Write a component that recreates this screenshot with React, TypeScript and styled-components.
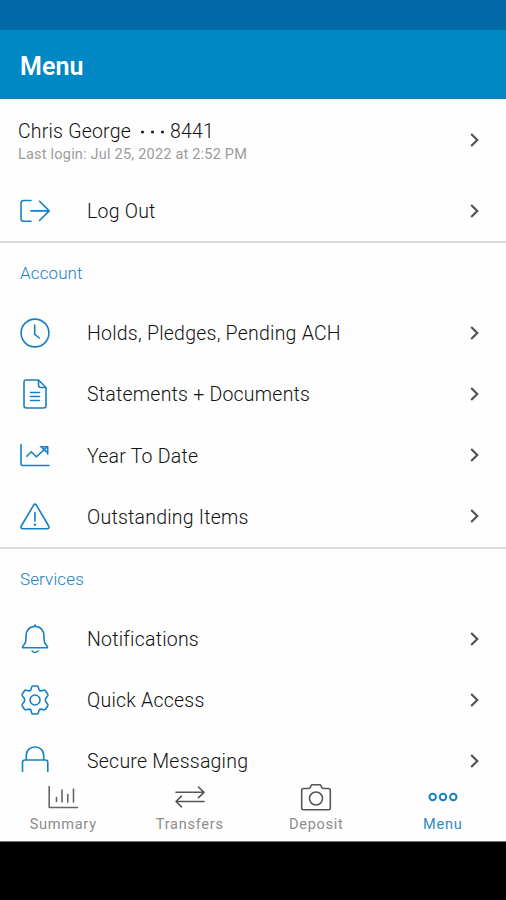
import React from "react";
import styled, { createGlobalStyle } from "styled-components";

const BLUE = "#1780c2";

const GlobalStyle = createGlobalStyle`
  * { box-sizing: border-box; }
  body { margin: 0; background: #000; }
`;

const Screen = styled.div`
  width: 506px;
  height: 900px;
  display: flex;
  flex-direction: column;
  overflow: hidden;
  background: #000;
  font-family: Roboto, sans-serif;
  font-weight: 400;
`;

const StatusBar = styled.div`
  flex: none;
  height: 30px;
  background: #0069a6;
`;

const Header = styled.header`
  flex: none;
  height: 69px;
  display: flex;
  align-items: center;
  padding: 4px 20px 0;
  background: #0088c5;
  border-bottom: 1px solid #2878a6;
`;

const Title = styled.h1`
  margin: 0;
  font-size: 25px;
  font-weight: 600;
  letter-spacing: 0.1px;
  color: #fff;
`;

const Content = styled.main`
  flex: none;
  height: 673px;
  overflow: hidden;
  background: #fefefe;
`;

const Profile = styled.div`
  height: 81px;
  display: flex;
  align-items: center;
  justify-content: space-between;
  padding: 0 23px 0 18px;
`;

const ProfileText = styled.div`
  padding-top: 6px;
`;

const Name = styled.div`
  display: flex;
  align-items: center;
  font-size: 19.5px;
  font-weight: 350;
  line-height: 24px;
  letter-spacing: 0.2px;
  color: #111;
`;

const MaskDots = styled.svg`
  width: 26px;
  height: 4px;
  margin: 0 4px 0 9px;
  fill: #222;
`;

const LastLogin = styled.div`
  font-size: 14.5px;
  line-height: 22px;
  letter-spacing: 0.21px;
  color: #9c9c9c;
`;

const Row = styled.div`
  height: 61.2px;
  display: flex;
  align-items: center;
  padding: 0 23px 0 20px;
`;

const RowLabel = styled.span`
  flex: 1;
  padding: 3px 0 0 37px;
  font-size: 19.5px;
  font-weight: 350;
  line-height: 20px;
  letter-spacing: 0.23px;
  color: #111;
`;

const Divider = styled.div`
  height: 2px;
  background: #dcdcdc;
`;

const SectionTitle = styled.h2`
  height: 59px;
  margin: 0;
  padding: 1px 20px 0;
  display: flex;
  align-items: center;
  font-size: 17px;
  font-weight: 350;
  letter-spacing: 0.12px;
  color: ${BLUE};
`;

const Svg = styled.svg<{ $color?: string; $weight?: number }>`
  flex: none;
  display: block;
  overflow: visible;
  fill: none;
  stroke: ${(p) => p.$color ?? BLUE};
  stroke-width: ${(p) => p.$weight ?? 1.6};
  stroke-linecap: round;
  stroke-linejoin: round;
`;

const ChevronSvg = styled.svg`
  flex: none;
  width: 14px;
  height: 16px;
  fill: none;
  stroke: #505050;
  stroke-width: 2.1;
`;

const NavBar = styled.nav`
  flex: none;
  height: 70px;
  display: grid;
  grid-template-columns: repeat(4, 1fr);
  background: #fefefe;
  border-bottom: 1px solid #777;
`;

const NavItem = styled.div<{ $active?: boolean }>`
  display: flex;
  flex-direction: column;
  align-items: center;
  padding-top: 10px;
  font-size: 14.5px;
  line-height: 20px;
  letter-spacing: 0.75px;
  color: ${(p) => (p.$active ? "#2c8aca" : "#8c8c8c")};
`;

const NavLabel = styled.span`
  margin-top: 3px;
`;

const Chevron = () => (
  <ChevronSvg viewBox="0 0 14 16">
    <path d="M2.2 2l6.1 6-6.1 6" />
  </ChevronSvg>
);

const icons = {
  logout: <path d="M11 4.500H3.800Q1 4.500 1 7.300v15.200Q1 25.300 3.800 25.300H11M11 14.900H29M19.500 5.300l9.700 9.600-9.700 9.600" />,
  clock: (
    <>
      <circle cx="15" cy="15" r="13.900" />
      <path d="M14.700 7v9.300l4.600 3.700" />
    </>
  ),
  document: (
    <>
      <path d="M6.200 1H18.500L26 8.500V26.500Q26 29 23.500 29H6.500Q4 29 4 26.500V3.200Q4 1 6.200 1zM18.500 1.200V6Q18.500 8.500 21 8.500H26" />
      <path d="M10.500 13.500h9M10.500 17.500h9M10.500 21.500h9" />
    </>
  ),
  trend: (
    <>
      <path d="M1 4.500V24Q1 25.500 2.500 25.500H29M6.800 16.300l4.500-4.500 5 5L27 7" />
      <path d="M20.500 6.700h7.200v7.400M22.300 7.800l4.200 4" />
    </>
  ),
  warning: (
    <>
      <path d="M13.600 4.200Q15 2 16.400 4.200L28.700 25Q29.700 27.700 27.500 27.700H2.500Q.3 27.700 1.300 25zM14.900 11.500v8.600" />
      <circle cx="14.900" cy="23.800" r=".5" />
    </>
  ),
  bell: (
    <path d="M15 .8v1.400M6 14.500V12C6 6.500 9.700 2.400 15 2.400S24 6.500 24 12v2.500c0 3 .5 4.800 2 6.300l1.200 1.400Q28 23.800 26.500 23.800H3.500Q2 23.800 2.800 22.200L4 20.800c1.500-1.500 2-3.300 2-6.300zM12 27q3 3 6 0" />
  ),
  gear: (
    <>
      <circle cx="15" cy="15" r="5" />
      <path d="M11.800 1.800Q12 1 13 1H17Q18 1 18.200 1.800L19 4.500Q19.400 5.800 20.700 5.900L24 5.200Q25 5 25.500 5.800L27.800 9.300Q28.300 10.200 27.600 11L25.800 13.200Q24.800 15 25.800 16.800L27.600 19Q28.300 19.800 27.800 20.700L25.500 24.200Q25 25 24 24.800L20.700 24.100Q19.400 24.200 19 25.500L18.200 28.200Q18 29 17 29H13Q12 29 11.800 28.200L11 25.500Q10.600 24.200 9.300 24.100L6 24.800Q5 25 4.500 24.200L2.200 20.700Q1.700 19.800 2.400 19L4.200 16.800Q5.200 15 4.200 13.200L2.400 11Q1.700 10.200 2.200 9.300L4.500 5.800Q5 5 6 5.200L9.300 5.900Q10.600 5.800 11 4.500z" />
    </>
  ),
  lock: (
    <path d="M6.300 14V9.500C6.300 4.500 9.700 1 15 1s8.700 3.500 8.700 8.500V14M2.500 32V16.500Q2.500 14 5 14H25.500Q27.800 14 27.800 16.500V32" />
  ),
};

type IconName = keyof typeof icons;

const Item = ({ icon, label }: { icon: IconName; label: string }) => (
  <Row>
    <Svg width="30" height="30" viewBox="0 0 30 30">{icons[icon]}</Svg>
    <RowLabel>{label}</RowLabel>
    <Chevron />
  </Row>
);

export default function App() {
  return (
    <>
      <GlobalStyle />
      <Screen>
        <StatusBar />
        <Header>
          <Title>Menu</Title>
        </Header>
        <Content>
          <Profile>
            <ProfileText>
              <Name>
                Chris George
                <MaskDots viewBox="0 0 26 4">
                  <circle cx="2.500" cy="2" r="1.600" />
                  <circle cx="12.500" cy="2" r="1.600" />
                  <circle cx="22.500" cy="2" r="1.600" />
                </MaskDots>
                8441
              </Name>
              <LastLogin>Last login: Jul 25, 2022 at 2:52 PM</LastLogin>
            </ProfileText>
            <Chevron />
          </Profile>
          <Item icon="logout" label="Log Out" />
          <Divider />
          <SectionTitle>Account</SectionTitle>
          <Item icon="clock" label="Holds, Pledges, Pending ACH" />
          <Item icon="document" label="Statements + Documents" />
          <Item icon="trend" label="Year To Date" />
          <Item icon="warning" label="Outstanding Items" />
          <Divider />
          <SectionTitle>Services</SectionTitle>
          <Item icon="bell" label="Notifications" />
          <Item icon="gear" label="Quick Access" />
          <Item icon="lock" label="Secure Messaging" />
        </Content>
        <NavBar>
          <NavItem>
            <Svg width="30" height="30" viewBox="0 0 30 30" $color="#666">
              <path d="M1.200 4.500V25.500H29.500M8.500 15.500v4M14 8v12M19.800 12.500v7.500M25.500 7v13" />
            </Svg>
            <NavLabel>Summary</NavLabel>
          </NavItem>
          <NavItem>
            <Svg width="30" height="30" viewBox="0 0 30 30" $color="#555">
              <path d="M1 10.300H29M23.500 5l5.500 5.300-5.500 5.300M29 19.500H1M6.500 14.200L1 19.500l5.500 5.300" />
            </Svg>
            <NavLabel>Transfers</NavLabel>
          </NavItem>
          <NavItem>
            <Svg width="30" height="30" viewBox="0 0 30 30" $color="#555">
              <path d="M2.500 6.500H7.500Q9 6.500 9.500 5L10 3.500Q10.300 2.700 11.500 2.700H18.500Q19.700 2.700 20 3.500L20.500 5Q21 6.500 22.500 6.500H27.500Q29.300 6.500 29.300 8.300V26Q29.300 27.700 27.500 27.700H2.500Q.7 27.700 .7 26V8.300Q.7 6.500 2.500 6.500z" />
              <circle cx="15" cy="16.500" r="6.500" />
            </Svg>
            <NavLabel>Deposit</NavLabel>
          </NavItem>
          <NavItem $active>
            <Svg width="30" height="30" viewBox="0 0 30 30" $weight={2}>
              <circle cx="4.700" cy="15" r="3.200" />
              <circle cx="15" cy="15" r="3.200" />
              <circle cx="25.300" cy="15" r="3.200" />
            </Svg>
            <NavLabel>Menu</NavLabel>
          </NavItem>
        </NavBar>
      </Screen>
    </>
  );
}
